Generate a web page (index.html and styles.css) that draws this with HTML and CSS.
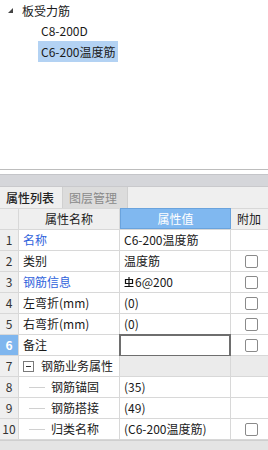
FILE: index.html
```html
<!DOCTYPE html>
<html lang="zh-CN">
<head>
  <meta charset="UTF-8" />
  <title>属性列表</title>
  <link rel="stylesheet" href="styles.css">
</head>
<body>

  <div class="tree">
    <div class="tree-root">
      <svg class="arrow" width="5" height="5" viewBox="0 0 5 5"><polygon points="5,0 5,5 0,5" fill="#444"/></svg>
      <span>板受力筋</span>
    </div>
    <div class="tree-item"><span>C8-200D</span></div>
    <div class="tree-item"><span class="selected">C6-200温度筋</span></div>
  </div>

  <div class="gap"></div>
  <div class="band"></div>

  <div class="tabs">
    <div class="tab active">属性列表</div>
    <div class="tab">图层管理</div>
  </div>

  <div class="grid">
    <div class="row head">
      <div class="num"></div>
      <div class="cell center">属性名称</div>
      <div class="cell center hl">属性值</div>
      <div class="cell">附加</div>
    </div>

    <div class="row">
      <div class="num">1</div>
      <div class="cell blue">名称</div>
      <div class="cell">C6-200温度筋</div>
      <div class="cell"></div>
    </div>
    <div class="row">
      <div class="num">2</div>
      <div class="cell">类别</div>
      <div class="cell">温度筋</div>
      <div class="cell"><span class="check"></span></div>
    </div>
    <div class="row">
      <div class="num">3</div>
      <div class="cell blue">钢筋信息</div>
      <div class="cell">
        <svg class="grade" width="10" height="11" viewBox="0 0 10 11"><path d="M1.5 2.5h7v4h-7z M5 0v9 M0.5 9.5h9" fill="none" stroke="#111" stroke-width="1.2"/></svg>6@200
      </div>
      <div class="cell"><span class="check"></span></div>
    </div>
    <div class="row">
      <div class="num">4</div>
      <div class="cell">左弯折(mm)</div>
      <div class="cell">(0)</div>
      <div class="cell"><span class="check"></span></div>
    </div>
    <div class="row">
      <div class="num">5</div>
      <div class="cell">右弯折(mm)</div>
      <div class="cell">(0)</div>
      <div class="cell"><span class="check"></span></div>
    </div>
    <div class="row">
      <div class="num current">6</div>
      <div class="cell">备注</div>
      <div class="cell editing"></div>
      <div class="cell"><span class="check"></span></div>
    </div>
    <div class="row">
      <div class="num">7</div>
      <div class="cell"><span class="minus"></span>钢筋业务属性</div>
      <div class="cell group"></div>
      <div class="cell group"></div>
    </div>
    <div class="row">
      <div class="num">8</div>
      <div class="cell sub"><span class="line"></span>钢筋锚固</div>
      <div class="cell">(35)</div>
      <div class="cell"></div>
    </div>
    <div class="row">
      <div class="num">9</div>
      <div class="cell sub"><span class="line"></span>钢筋搭接</div>
      <div class="cell">(49)</div>
      <div class="cell"></div>
    </div>
    <div class="row">
      <div class="num">10</div>
      <div class="cell sub"><span class="line"></span>归类名称</div>
      <div class="cell">(C6-200温度筋)</div>
      <div class="cell"><span class="check"></span></div>
    </div>
  </div>

  <div class="footer"></div>

</body>
</html>
```

FILE: styles.css
```css
body {
  margin: 0;
  width: 268px;
  height: 450px;
  overflow: hidden;
  font-family: "Noto Sans CJK SC", "Liberation Sans", sans-serif;
  font-size: 12px;
  color: #1a1a1a;
  background-color: #fff;
}


.tree {
  height: 169px;
  border-bottom: 1px solid #bdbdbd;
  box-sizing: content-box;
}

.tree-root {
  height: 20px;
  display: flex;
  align-items: center;
  padding-left: 8px;
}

.tree-root .arrow {
  margin-right: 9px;
}

.tree-item {
  height: 21px;
  display: flex;
  align-items: center;
  padding-left: 38px;
}

.tree-item span {
  padding: 0 3px;
  line-height: 21px;
}

.tree-item .selected {
  background-color: #b3d2f3;
}


.gap {
  height: 4px;
  border-bottom: 1px solid #c4c5c9;
}

.band {
  height: 11px;
  background-color: #d5d6da;
}


.tabs {
  height: 21px;
  display: flex;
  background-color: #efefef;
  border-top: 1px solid #c9c9cc;
}

.tab {
  padding: 0 6px;
  line-height: 21px;
  width: 50px;
  border-right: 1px solid #d0d0d0;
}

.tab.active {
  color: #222;
  font-weight: 500;
}

.tab:not(.active) {
  width: 52px;
  background-color: #dcdcdc;
  color: #8a8a8a;
  border-right: 1px solid #cfcfcf;
}


.row {
  display: grid;
  grid-template-columns: 19px 101px 111px 37px;
  height: 21px;
  border-bottom: 1px solid #d8d8d8;
  box-sizing: border-box;
}

.row.head {
  height: 22px;
  background-color: #efefef;
  border-top: 1px solid #d8d8d8;
}

.num {
  background-color: #efefef;
  border-right: 1px solid #d8d8d8;
  text-align: center;
  line-height: 20px;
  color: #333;
}

.num.current {
  background-color: #7fb6ee;
  color: #fff;
  font-weight: bold;
}

.cell {
  border-right: 1px solid #d8d8d8;
  padding-left: 4px;
  line-height: 20px;
  display: flex;
  align-items: center;
  white-space: nowrap;
  overflow: hidden;
}

.cell:last-child {
  border-right: none;
}

.cell.center {
  justify-content: center;
  padding-left: 0;
}

.head .cell:last-child {
  padding-left: 6px;
}

.cell.hl {
  background-color: #80b8f0;
  color: #fff;
  border: 1px solid #6aa3dd;
  margin-top: -1px;
}

.blue {
  color: #2f63dc;
}

.grade {
  margin-right: 1px;
}

.cell.editing {
  border: 2px solid #6e6e6e;
  margin: -1px 0 -2px -1px;
}

.cell.group {
  background-color: #ebebeb;
}

.minus {
  width: 9px;
  height: 9px;
  border: 1px solid #7a7a7a;
  margin-right: 7px;
  position: relative;
}

.minus::after {
  content: "";
  position: absolute;
  left: 2px;
  top: 4px;
  width: 5px;
  height: 1px;
  background-color: #333;
}

.cell.sub {
  padding-left: 10px;
}

.line {
  width: 16px;
  height: 1px;
  background-color: #d0d0d0;
  margin-right: 6px;
}

.check {
  width: 11px;
  height: 11px;
  border: 1px solid #8a8a8a;
  border-radius: 2px;
  margin-left: 10px;
  background-color: #fff;
}


.footer {
  height: 10px;
  background-color: #e4e4e4;
  border-top: 1px solid #cfcfcf;
}
```
